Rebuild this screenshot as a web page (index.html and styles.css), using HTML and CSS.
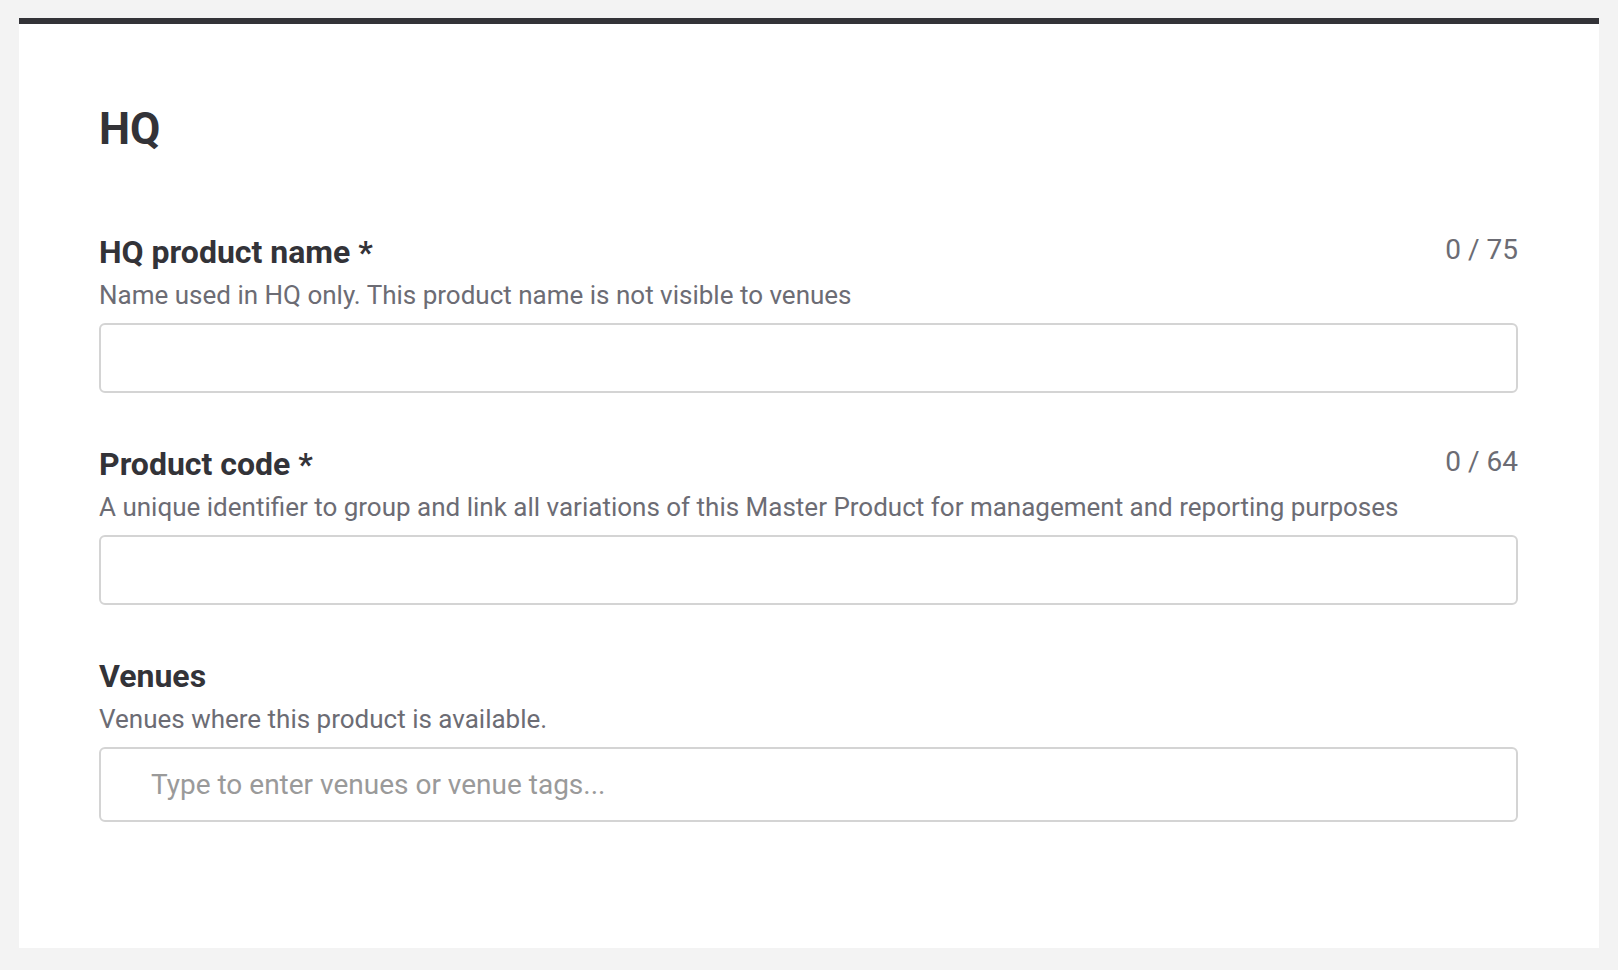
FILE: index.html
```html
<!DOCTYPE html>
<html lang="en">
<head>
    <meta charset="UTF-8">
    <meta name="viewport" content="width=device-width, initial-scale=1.0">
    <title>HQ product</title>
    <link rel="stylesheet" href="styles.css">
</head>
<body>
    <div class="card">
        <h1>HQ</h1>

        <div class="field">
            <div class="field-head">
                <label for="hq-name">HQ product name *</label>
                <span class="counter">0 / 75</span>
            </div>
            <p class="hint">Name used in HQ only. This product name is not visible to venues</p>
            <input type="text" id="hq-name" maxlength="75">
        </div>

        <div class="field">
            <div class="field-head">
                <label for="product-code">Product code *</label>
                <span class="counter">0 / 64</span>
            </div>
            <p class="hint">A unique identifier to group and link all variations of this Master Product for management and reporting purposes</p>
            <input type="text" id="product-code" maxlength="64">
        </div>

        <div class="field">
            <div class="field-head">
                <label for="venues">Venues</label>
            </div>
            <p class="hint">Venues where this product is available.</p>
            <input type="text" id="venues" class="tags-input" placeholder="Type to enter venues or venue tags...">
        </div>
    </div>
</body>
</html>
```

FILE: styles.css
```css
body {
    font-family: Roboto, "Liberation Sans", sans-serif;
    background-color: #f3f3f3;
    margin: 0;
    padding: 18px 19px 22px;
    min-height: 100vh;
    box-sizing: border-box;
    display: flex;
}
.card {
    flex: 1;
    background-color: white;
    border-top: 6px solid #333338;
    padding: 81px 81px 0 80px;
}
h1 {
    margin: 0 0 83px;
    font-size: 44px;
    line-height: 48px;
    font-weight: 700;
    color: #333338;
}
.field {
    margin-bottom: 55px;
}
.field-head {
    display: flex;
    justify-content: space-between;
    align-items: flex-start;
}
label {
    font-size: 32px;
    line-height: 32px;
    font-weight: 700;
    color: #333338;
}
.counter {
    font-size: 28px;
    line-height: 28px;
    color: #6c6c74;
}
.hint {
    margin: 12px 0 13px;
    font-size: 26px;
    line-height: 30px;
    color: #6c6c74;
}
input {
    display: block;
    width: 100%;
    height: 70px;
    box-sizing: border-box;
    border: 2px solid #d4d4d4;
    border-radius: 6px;
    padding: 0 20px;
    font-family: inherit;
    font-size: 28px;
    color: #333338;
    background: white;
    outline: none;
}
.tags-input {
    height: 75px;
    padding-left: 50px;
}
.tags-input::placeholder {
    color: #9a9a9a;
}
```
